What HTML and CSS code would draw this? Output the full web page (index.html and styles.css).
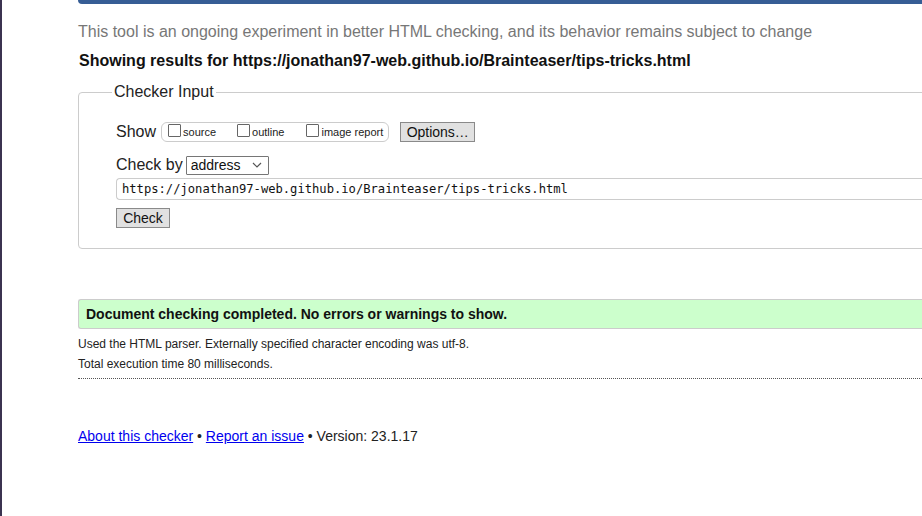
FILE: index.html
```html
<!DOCTYPE html>
<html>
<head>
<meta charset="utf-8">
<link rel="stylesheet" href="styles.css">
</head>
<body>
<div class="frame">
  <div class="page">
    <div class="topbar"></div>
    <p class="intro">This tool is an ongoing experiment in better HTML checking, and its behavior remains subject to change</p>
    <p class="showing">Showing results for https://jonathan97-web.github.io/Brainteaser/tips-tricks.html</p>
    <fieldset class="checker">
      <legend>Checker Input</legend>
      <div class="row show-row">
        <span class="lbl">Show</span>
        <span class="opts">
          <label class="opt"><span class="box"></span>source</label>
          <label class="opt"><span class="box"></span>outline</label>
          <label class="opt"><span class="box"></span>image report</label>
        </span>
        <span class="btn options">Options…</span>
      </div>
      <div class="row check-row">
        <span class="lbl">Check by</span>
        <span class="select">address<svg class="chev" width="10" height="6" viewBox="0 0 10 6"><path d="M1 1l4 4 4-4" fill="none" stroke="#555" stroke-width="1.2"/></svg></span>
      </div>
      <div class="url">https://jonathan97-web.github.io/Brainteaser/tips-tricks.html</div>
      <span class="btn check">Check</span>
    </fieldset>
    <div class="success">Document checking completed. No errors or warnings to show.</div>
    <p class="info">Used the HTML parser. Externally specified character encoding was utf-8.</p>
    <p class="info">Total execution time 80 milliseconds.</p>
    <div class="dots"></div>
    <p class="footer"><a href="#">About this checker</a> • <a href="#">Report an issue</a> • Version: 23.1.17</p>
  </div>
</div>
</body>
</html>
```
FILE: styles.css
```css
html, body {
  margin: 0;
  padding: 0;
  background: #fff;
  overflow: hidden;
  height: 516px;
}
body {
  font-family: "Liberation Sans", Arial, sans-serif;
  color: #111;
}
.frame {
  border-left: 2px solid #3b3350;
  height: 516px;
  box-sizing: border-box;
  padding-left: 76px;
}
.page {
  width: 1000px;
}
.topbar {
  height: 4px;
  background: #365d95;
  border-bottom-left-radius: 6px;
}
.intro {
  margin: 19px 0 0 0;
  font-size: 16px;
  line-height: 18px;
  color: #777;
}
.showing {
  margin: 11px 0 0 1px;
  font-size: 16px;
  line-height: 18px;
  font-weight: bold;
  color: #111;
}
.checker {
  margin: 13px 0 0 0;
  border: 1px solid #ccc;
  border-radius: 4px;
  padding: 20px 0 20px 37px;
}
.checker legend {
  font-size: 16px;
  padding: 0 2px;
  margin-left: -4px;
  color: #222;
  line-height: 18px;
}
.row {
  display: flex;
  align-items: center;
}
.lbl {
  font-size: 16px;
  color: #222;
}
.show-row {
  height: 22px;
}
.opts {
  display: flex;
  align-items: center;
  margin-left: 5px;
  border: 1px solid #ccc;
  border-radius: 6px;
  height: 18px;
  padding: 0 5px 0 6px;
}
.opt {
  display: flex;
  align-items: center;
  font-size: 11px;
  color: #222;
  margin-right: 0;
}
.opt + .opt {
  margin-left: 21px;
}
.opt:nth-child(3) {
  margin-left: 22px;
}
.box {
  width: 11px;
  height: 11px;
  border: 1px solid #666;
  border-radius: 1px;
  margin-right: 2px;
  margin-top: -3px;
  background: #fff;
}
.btn {
  display: inline-flex;
  align-items: center;
  justify-content: center;
  background: #e1e1e1;
  border: 1px solid #8a8a8a;
  font-size: 14px;
  color: #111;
  box-sizing: border-box;
  height: 20px;
}
.options {
  margin-left: 11px;
  width: 75px;
}
.check-row {
  margin-top: 12px;
  height: 20px;
}
.select {
  margin-left: 3px;
  width: 83px;
  height: 19px;
  box-sizing: border-box;
  border: 1px solid #767676;
  border-radius: 1px;
  font-size: 14px;
  padding-left: 4px;
  display: flex;
  align-items: center;
  justify-content: space-between;
  padding-right: 6px;
  color: #111;
}
.url {
  margin-top: 3px;
  height: 22px;
  box-sizing: border-box;
  border: 1px solid #ccc;
  border-radius: 4px;
  border-right: none;
  border-top-right-radius: 0;
  border-bottom-right-radius: 0;
  font-family: "DejaVu Sans Mono", monospace;
  font-size: 12.15px;
  padding-left: 5px;
  display: flex;
  align-items: center;
  color: #111;
}
.check {
  margin-top: 8px;
  width: 54px;
}
.success {
  margin-top: 50px;
  height: 30px;
  box-sizing: border-box;
  background: #ccffcc;
  border: 1px solid #ccc;
  border-right: none;
  border-radius: 3px 0 0 3px;
  font-size: 14px;
  font-weight: bold;
  padding-left: 7px;
  display: flex;
  align-items: center;
  color: #111;
}
.info {
  margin: 8px 0 0 0;
  font-size: 12px;
  line-height: 14px;
  color: #222;
}
.info + .info {
  margin-top: 6px;
}
.dots {
  margin-top: 7px;
  border-top: 1px dotted #555;
}
.footer {
  margin: 49px 0 0 0;
  font-size: 14px;
  line-height: 16px;
  color: #222;
}
.footer a {
  color: #0000ee;
}
```
